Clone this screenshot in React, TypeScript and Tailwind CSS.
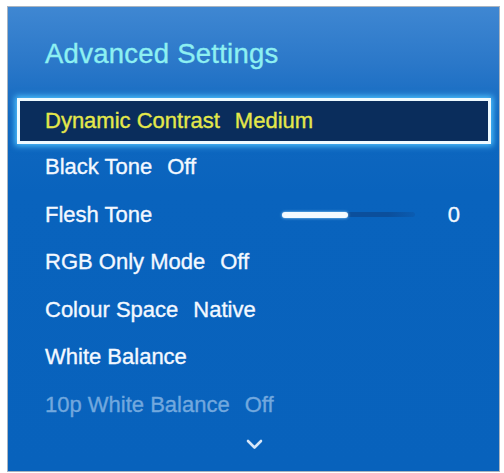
import { ReactNode } from "react"

const Row = ({ children, dim }: { children: ReactNode; dim?: boolean }) => (
  <div
    className={`h-[47.5px] pt-[10px] pl-[37px] leading-[26px] text-[22px] ${dim ? "text-[#72a8de]" : "text-[#f3f8ff]"}`}
  >
    {children}
  </div>
)

const Item = ({ label, value }: { label: string; value?: string }) => (
  <div className="flex items-center gap-[15px]">
    <span>{label}</span>
    {value && <span>{value}</span>}
  </div>
)

const App = () => {
  return (
    <div className="w-[504px] h-[473px] bg-white pt-[6px] pl-[7px] font-['Liberation_Sans',Arial,sans-serif] [-webkit-text-stroke:0.35px_currentColor]">
      <div className="w-[493px] h-[466px] border border-[#a9b4c0] bg-[linear-gradient(180deg,#3f87d2_0%,#2b78c9_12%,#1068c0_24%,#0963bd_40%,#0862bc_100%)] flex flex-col">
        <div className="h-[91px] pt-[31px] pl-[37px] leading-[32px] text-[27.5px] tracking-[0.25px] text-[#8df0f2]">
          Advanced Settings
        </div>

        <div className="ml-[9px] mr-[8px] h-[46px] border-[3px] border-[#eefaff] bg-[#0a2d5c] shadow-[0_0_6px_2px_#4fc3ff] pt-[7px] pl-[25px] leading-[26px] text-[22px] text-[#e4e84a]">
          <Item label="Dynamic Contrast" value="Medium" />
        </div>

        <Row>
          <Item label="Black Tone" value="Off" />
        </Row>
        <Row>
          <div className="flex items-center pr-[39px]">
            <span className="w-[237px]">Flesh Tone</span>
            <div className="relative w-[133px] h-[5px] rounded-full bg-[linear-gradient(90deg,#0a56a8,#0b4f9c_20%,#0b4f9c_80%,#0a5cb2)]">
              <div className="absolute left-0 top-[-0.5px] h-[6px] w-[66px] rounded-full bg-[#f4fbff] shadow-[0_0_3px_#9fdcff]" />
            </div>
            <span className="flex-1 text-right">0</span>
          </div>
        </Row>
        <Row>
          <Item label="RGB Only Mode" value="Off" />
        </Row>
        <Row>
          <Item label="Colour Space" value="Native" />
        </Row>
        <Row>
          <Item label="White Balance" />
        </Row>
        <Row dim>
          <Item label="10p White Balance" value="Off" />
        </Row>

        <div className="flex justify-center pt-[10px] pl-[2px]">
          <svg width="17" height="11" viewBox="0 0 17 11" fill="none">
            <polyline
              points="2,2 8.5,8.5 15,2"
              stroke="#d6e6f8"
              strokeWidth="2.6"
              strokeLinecap="round"
              strokeLinejoin="round"
            />
          </svg>
        </div>
      </div>
    </div>
  )
}

export default App
